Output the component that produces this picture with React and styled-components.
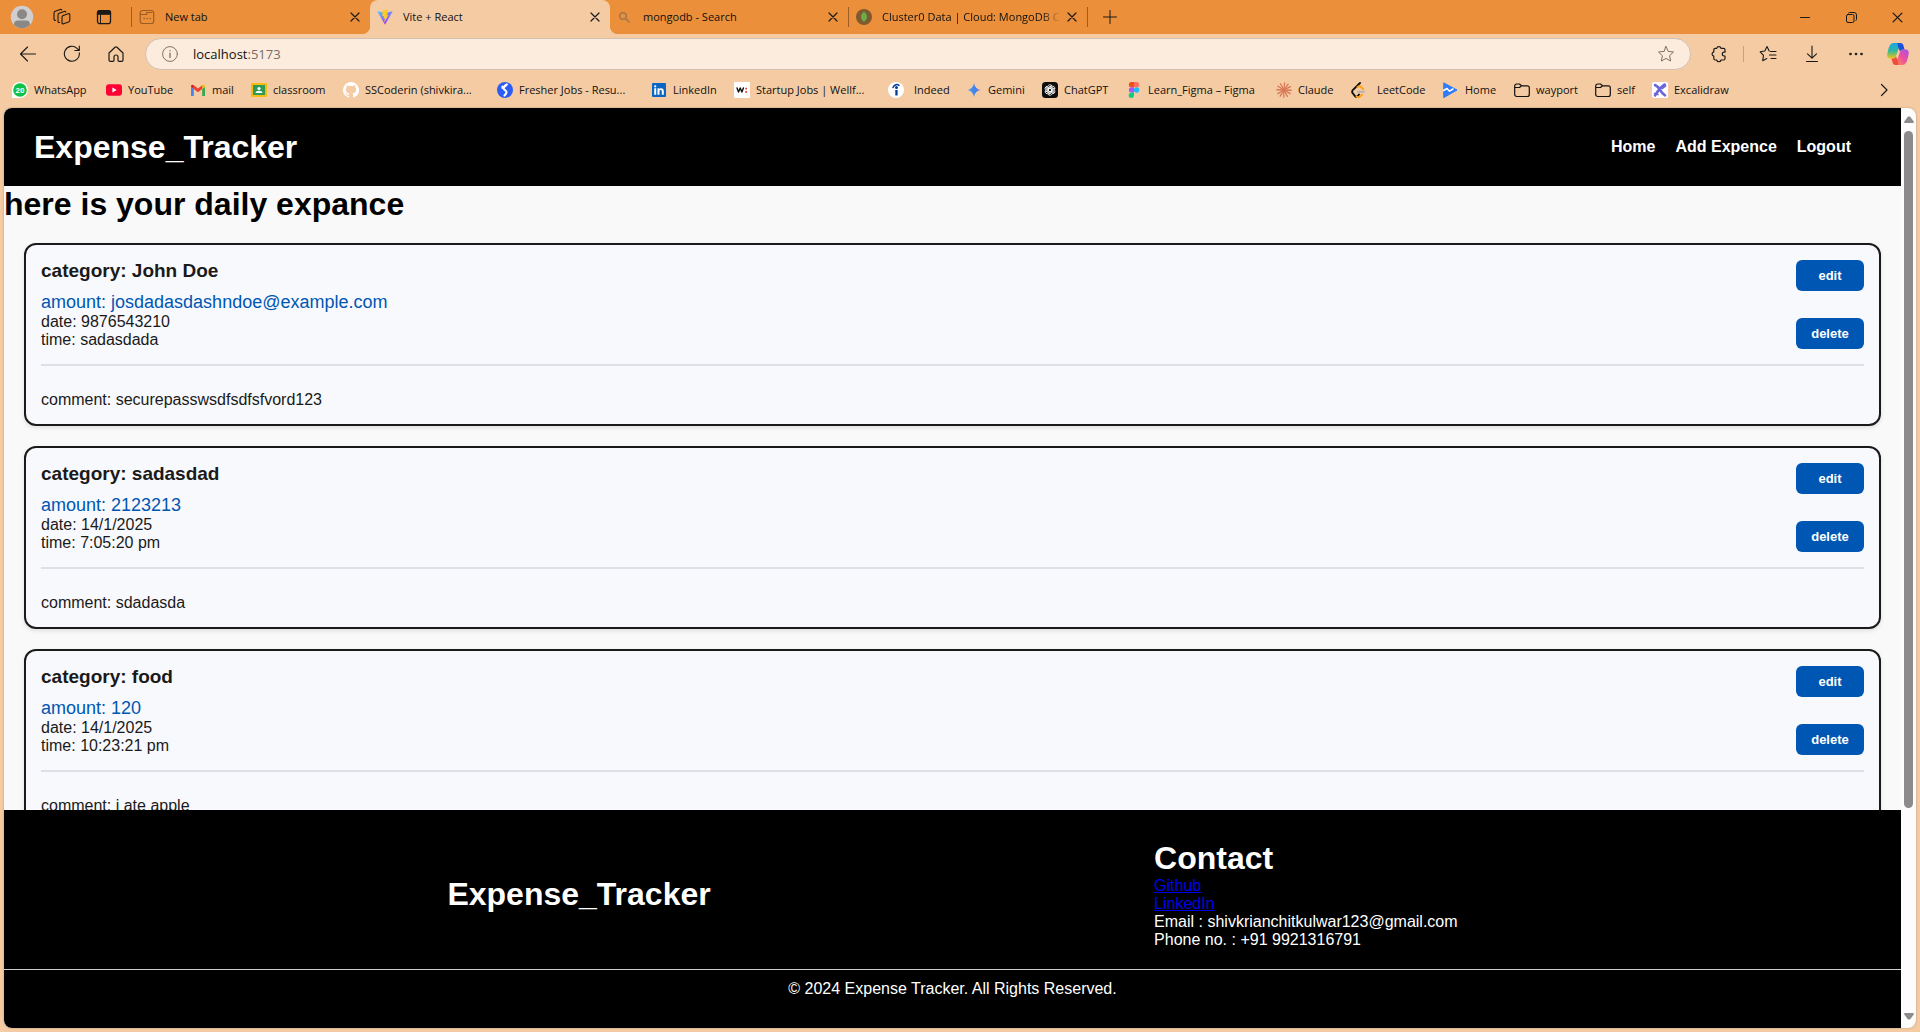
import React from "react";
import styled, { createGlobalStyle, css } from "styled-components";

const Global = createGlobalStyle`
  * { box-sizing: border-box; margin: 0; padding: 0; }
  body { background: #f5cba3; overflow: hidden; }
`;

const ui = '"Segoe UI", "Open Sans", "Noto Sans", sans-serif';
const arial = 'Arial, "Liberation Sans", sans-serif';

const Window = styled.div`
  height: 100vh;
  display: flex;
  flex-direction: column;
  background: #f5cba3;
  font-family: ${ui};
  color: #111;
`;

const IconButton = styled.button`
  display: flex;
  align-items: center;
  justify-content: center;
  flex: none;
  width: ${(p) => p.$w || 32}px;
  height: 30px;
  border: 0;
  background: none;
  color: #1b1a19;
`;

/* Tab strip */
const TabStrip = styled.header`
  display: flex;
  align-items: center;
  height: 34px;
  flex: none;
  background: #eb8f3a;
  font-size: 11px;
  line-height: 16px;
`;
const StripTools = styled.div`
  display: flex;
  align-items: center;
  width: 131px;
  padding-left: 6px;
  gap: 8px;
`;
const Tab = styled.div`
  position: relative;
  display: flex;
  align-items: center;
  flex: none;
  width: ${(p) => p.$w}px;
  height: 34px;
  padding: 0 7px;
  ${(p) =>
    p.$active &&
    css`
      background: #f5cba3;
      border-radius: 8px 8px 0 0;
      &::before,
      &::after {
        content: "";
        position: absolute;
        bottom: 0;
        width: 8px;
        height: 8px;
      }
      &::before {
        right: 100%;
        background: radial-gradient(circle at 0 0, transparent 8px, #f5cba3 8px);
      }
      &::after {
        left: 100%;
        background: radial-gradient(circle at 100% 0, transparent 8px, #f5cba3 8px);
      }
    `}
`;
const TabTitle = styled.span`
  flex: 1;
  min-width: 0;
  margin-left: 10px;
  overflow: hidden;
  white-space: nowrap;
  ${(p) => p.$fade && css`mask-image: linear-gradient(90deg, #000 88%, transparent 98%);`}
`;
const TabClose = styled.button`
  display: flex;
  align-items: center;
  justify-content: center;
  width: 16px;
  height: 16px;
  border: 0;
  background: none;
  color: #1b1a19;
`;
const Divider = styled.span`
  flex: none;
  width: 1px;
  height: ${(p) => p.$h}px;
  background: ${(p) => p.$c};
`;
const WindowControls = styled.div`
  display: flex;
  margin-left: auto;
`;

/* Address bar */
const Toolbar = styled.div`
  display: flex;
  align-items: center;
  flex: none;
  height: 40px;
  padding: 0 8px 0 12px;
`;
const NavButtons = styled.div`
  display: flex;
  gap: 12px;
  margin-right: 13px;
`;
const Omnibox = styled.div`
  flex: 1;
  display: flex;
  align-items: center;
  height: 32px;
  padding: 0 8px 0 16px;
  border: 1px solid #d2c1b1;
  border-radius: 16px;
  background: #fcecdd;
`;
const Address = styled.div`
  flex: 1;
  display: grid;
  margin-left: 15px;
  font-size: 13px;
  line-height: 18px;
`;
const AddressInput = styled.input`
  grid-area: 1 / 1;
  border: 0;
  outline: 0;
  background: none;
  color: transparent;
  font: inherit;
`;
const AddressText = styled.span`
  grid-area: 1 / 1;
  pointer-events: none;
  span { color: #756d66; }
`;
const ToolbarTools = styled.div`
  display: flex;
  align-items: center;
  gap: 12px;
  margin-left: 12px;
  ${Divider} { margin: 0 -4px; }
`;

/* Bookmarks */
const Bookmarks = styled.nav`
  display: flex;
  align-items: center;
  flex: none;
  height: 34px;
  padding: 0 20px 2px 12px;
  font-size: 11px;
  line-height: 16px;
  button { margin-left: auto; }
`;
const Bookmark = styled.a`
  display: flex;
  align-items: center;
  flex: none;
  gap: ${(p) => p.$gap || 6}px;
  width: ${(p) => p.$w}px;
  color: inherit;
  text-decoration: none;
  white-space: nowrap;
  svg { flex: none; }
`;

/* Page */
const Viewport = styled.div`
  flex: 1;
  min-height: 0;
  display: flex;
  margin: 0 4px 4px;
  border-radius: 8px;
  overflow: hidden;
  background: #fcfcfc;
  box-shadow: 0 0 2px rgba(0, 0, 0, 0.3);
`;
const Page = styled.div`
  flex: 1;
  min-width: 0;
  display: flex;
  flex-direction: column;
  background: #f9f9f9;
  font-family: ${arial};
  font-size: 16px;
  line-height: 18px;
  color: #1a1a1a;
`;
const Title = styled.h1`
  font-size: 32px;
  line-height: 37px;
  color: ${(p) => p.$c || "#fff"};
`;
const SiteHeader = styled.header`
  display: flex;
  align-items: center;
  justify-content: space-between;
  flex: none;
  height: 78px;
  padding: 0 50px 0 30px;
  background: #000;
`;
const SiteNav = styled.nav`
  display: flex;
  gap: 20px;
  a {
    color: #fff;
    font-weight: bold;
    text-decoration: none;
  }
`;
const Main = styled.main`
  flex: 1;
  min-height: 0;
  overflow: hidden;
`;
const CardList = styled.section`
  display: flex;
  flex-direction: column;
  gap: 20px;
  padding: 20px;
`;
const Card = styled.article`
  padding: 15px;
  border: 2px solid #1a1a1a;
  border-radius: 12px;
  background: #f8f9fc;
  box-shadow: 0 2px 4px rgba(0, 0, 0, 0.1);
`;
const CardTop = styled.div`
  display: flex;
  justify-content: space-between;
  padding-bottom: 15px;
  border-bottom: 2px solid #dee0e8;
`;
const Category = styled.h3`
  margin-bottom: 10px;
  font-size: 19px;
  line-height: 22px;
`;
const Amount = styled.p`
  color: #0056b3;
  font-size: 18px;
  line-height: 21px;
`;
const Comment = styled.p`
  margin-top: 25px;
`;
const Actions = styled.div`
  display: flex;
  flex-direction: column;
  justify-content: space-between;
`;
const ActionButton = styled.button`
  width: 68px;
  height: 31px;
  border: 0;
  border-radius: 6px;
  background: #0056b3;
  color: #fff;
  font: bold 13px/15px ${arial};
`;
const Footer = styled.footer`
  flex: none;
  background: #000;
  color: #fff;
`;
const FooterTop = styled.div`
  display: flex;
  align-items: center;
  justify-content: space-evenly;
  padding: 30px 0 20px;
  border-bottom: 1px solid #ccc;
`;
const Contact = styled.address`
  font-style: normal;
  a { display: block; width: fit-content; color: #0000ee; }
`;
const Copyright = styled.p`
  padding: 10px 0 30px;
  text-align: center;
`;
const Scrollbar = styled.div`
  display: flex;
  flex-direction: column;
  align-items: center;
  flex: none;
  width: 15px;
  padding: 8px 0;
  gap: 8px;
`;
const Track = styled.div`
  flex: 1;
  width: 9px;
`;
const Thumb = styled.div`
  height: 76%;
  height: calc(77% + 4px);
  border-radius: 5px;
  background: #8b8b8b;
`;

const Svg = ({ s = 16, box = 16, children, ...rest }) => (
  <svg width={s} height={s} viewBox={`0 0 ${box} ${box}`} fill="none" stroke="currentColor" strokeLinecap="round" strokeLinejoin="round" aria-hidden="true" {...rest}>
    {children}
  </svg>
);
const Fill = ({ children, ...rest }) => <Svg stroke="none" {...rest}>{children}</Svg>;

const CloseIcon = ({ s = 10 }) => <Svg s={s} box={10} strokeWidth="1.2"><path d="M1 1l8 8M9 1L1 9" /></Svg>;
const Avatar = () => (
  <Fill s={24} box={24}>
    <circle cx="12" cy="12" r="11.2" fill="#d0cece" />
    <circle cx="12" cy="9.300" r="5" fill="#8a8886" />
    <path d="M4 19.800c0-3.500 2-4.300 4-4.300h8c2 0 4 .8 4 4.300a11.200 11.200 0 0 1-16 0z" fill="#8a8886" />
  </Fill>
);
const Workspaces = () => (
  <Svg s={18} box={18} strokeWidth="1.100">
    <path d="M9 9.200c0-.8.4-1.400 1.200-1.700l5-1.800c.9-.3 1.600 0 1.600 1v5.500c0 .8-.4 1.400-1.200 1.700l-5 1.900c-.9.3-1.600 0-1.600-1z" />
    <path d="M6.600 14.500c-.9.2-1.600-.1-1.600-1V7c0-.8.4-1.400 1.200-1.700l5-1.800c.7-.2 1.300-.1 1.500.5" />
    <path d="M2.600 12.300c-.9.2-1.600-.1-1.600-1V5c0-.8.4-1.400 1.200-1.700l5-1.800c.7-.2 1.300-.1 1.500.5" />
  </Svg>
);
const TabActions = () => (
  <Svg strokeWidth="1.300"><rect x="1.500" y="1.700" width="13" height="13" rx="2.500" /><path d="M1.500 3.700a2 2 0 0 1 2-2h9a2 2 0 0 1 2 2v1.500h-13z" fill="currentColor" /><path d="M4.500 5v9" strokeWidth="1" /></Svg>
);
const NewTabIcon = () => (
  <Svg stroke="#9b5d25" strokeWidth="1.200"><rect x="1.200" y="1.500" width="13.500" height="13" rx="2.500" /><path d="M1.500 5.500h6.200V3.500h5" /><path d="M5 9.500h.2M8 9.500h.2M11 9.500h.2" strokeWidth="1.500" /></Svg>
);
const Vite = () => (
  <Fill><defs><linearGradient id="v1" x1="0" y1="0" x2=".6" y2="1"><stop stopColor="#41d1ff" /><stop offset="1" stopColor="#a82bfe" /></linearGradient></defs>
    <path d="M.3 2.300L8 15.700 15.700 2.300 8 3.700z" fill="url(#v1)" /><path d="M10.800.3L5.600 1.400l-.4 6 1.800-.3-.5 2.700 1.400-.4-.8 4.300L11.500 6l-1.700.3.8-2.600z" fill="#ffc92a" /></Fill>
);
const SearchIcon = () => <Svg stroke="#a4774e" strokeWidth="1.600"><circle cx="6" cy="7" r="3.300" /><path d="M8.500 9.500L12 13" /></Svg>;
const Mongo = () => <Fill><circle cx="8" cy="8" r="8" fill="#7e5a2f" /><path d="M8 2.500c2.200 2 3 3.600 3 5.200 0 2-1.200 3.600-2.700 4.500v1.300h-.6v-1.300C6.200 11.300 5 9.700 5 7.700c0-1.600.8-3.200 3-5.200z" fill="#6cac48" /></Fill>;
const Plus = () => <Svg s={14} box={14}><path d="M7 .5v13M.5 7h13" /></Svg>;
const Minimize = () => <Svg s={10} box={10}><path d="M.5 5.500h9" /></Svg>;
const Restore = () => <Svg s={11} box={11}><rect x=".5" y="2.500" width="7.500" height="8" rx="1.500" /><path d="M2.500 1a2 2 0 0 1 1-.5H8a2.500 2.500 0 0 1 2.500 2.500v4.500a1.500 1.500 0 0 1-.5 1" /></Svg>;
const Back = () => <Svg strokeWidth="1.100"><path d="M15.500 8H.8M7.500 1L.5 8l7 7" /></Svg>;
const Reload = () => <Svg s={18} box={18} strokeWidth="1.100"><path d="M16.300 7.800A7.500 7.500 0 1 1 14 3.300l2 2M16.300 1v4.500h-4.500" /></Svg>;
const HomeIcon = () => <Svg s={18} box={18} strokeWidth="1.200"><path d="M2 8l6-5.700a1.500 1.500 0 0 1 2 0L16 8v7a1.300 1.300 0 0 1-1.300 1.300H12a1 1 0 0 1-1-1V12a2 2 0 0 0-4 0v3.300a1 1 0 0 1-1 1H3.300A1.300 1.300 0 0 1 2 15z" /></Svg>;
const Info = () => <Svg stroke="#7b746d"><circle cx="8" cy="8" r="7.400" /><path d="M8 7.200v4.300M8 4.600v.2" strokeWidth="1.300" /></Svg>;
const starPath = "M9 1.500l2.200 4.900 5.300.6-3.900 3.700 1 5.300L9 13.400 4.400 16l1-5.300L1.500 7l5.300-.6z";
const Star = () => <Svg s={18} box={18} stroke="#77716a"><path d={starPath} /></Svg>;
const Puzzle = () => <Svg s={18} box={18} strokeWidth="1.200"><path d="M6.700 3.300a2.200 2.200 0 0 1 4.300 0h2.500A1.500 1.500 0 0 1 15 4.800v2.400h-.8a1.900 1.900 0 0 0 0 3.800h.8v2.500a1.500 1.500 0 0 1-1.500 1.500H11a2.200 2.200 0 0 1-4.300 0H5.300a1.500 1.500 0 0 1-1.500-1.500V11.200a2.200 2.200 0 0 1 0-4.300V4.800a1.500 1.500 0 0 1 1.500-1.500z" /></Svg>;
const Favorites = () => <Svg s={18} box={18} strokeWidth="1.100"><path d="M10.200 6L8 1.500 5.800 6 1.200 6.800l3.300 3.500-.8 5.400 4.100-2.200M11.500 6.500H17M10.500 10H17M12 13.500h5" /></Svg>;
const Download = () => <Svg s={18} box={18} strokeWidth="1.100"><path d="M9 1v12M4.500 8.800L9 13.200l4.500-4.400M3.500 16.500h11" /></Svg>;
const Dots = () => <Fill fill="currentColor"><circle cx="2.500" cy="8" r="1.300" /><circle cx="8" cy="8" r="1.300" /><circle cx="13.500" cy="8" r="1.300" /></Fill>;
const Copilot = () => (
  <Fill s={24} box={24}>
    <defs>
      <linearGradient id="c1" x1="0" y1="0" x2="0" y2="1"><stop stopColor="#17a6e8" /><stop offset=".5" stopColor="#2fb8a0" /><stop offset="1" stopColor="#f2c611" /></linearGradient>
      <linearGradient id="c2" x1="1" y1="0" x2="0" y2="1"><stop stopColor="#a64df0" /><stop offset=".5" stopColor="#f0509a" /><stop offset="1" stopColor="#ff9a4a" /></linearGradient>
    </defs>
    <path d="M16 5.500L15 3a3 3 0 0 0-2.700-2H7.500C4.500 1 3.300 4 2.300 7.500S0 16.500 4 16.500h3c2 0 2.800-1.500 3.200-3L12.500 7c.5-1.300 1.500-1.500 3.500-1.500z" fill="url(#c1)" />
    <path d="M8 18.500L9 21a3 3 0 0 0 2.700 2h4.800c3 0 4.200-3 5.200-6.500S24 7.500 20 7.500h-3c-2 0-2.800 1.500-3.200 3L11.500 17c-.5 1.300-1.500 1.500-3.500 1.500z" fill="url(#c2)" />
    <path d="M11.500 1h3A3 3 0 0 1 17.300 3l1.200 4.500H17c-1.500 0-2.400.7-3 2L12 5z" fill="#1b52d8" />
    <path d="M12.500 23h-3A3 3 0 0 1 6.700 21l-1.200-4.500H7c1.500 0 2.400-.7 3-2l2 4.500z" fill="#ee4f3a" />
  </Fill>
);
const Chevron = () => <Svg strokeWidth="1.200"><path d="M5.500 2.500L11 8l-5.500 5.500" /></Svg>;
const Folder = () => <Svg strokeWidth="1.200"><path d="M.7 4a2 2 0 0 1 2-2h2.800L7.500 3.800h5.800a2 2 0 0 1 2 2v6.700a2 2 0 0 1-2 2H2.700a2 2 0 0 1-2-2zM.7 5.500h4.800L7.500 3.800" /></Svg>;

const WhatsApp = () => <Fill><path d="M0 16V8a8 8 0 1 1 8 8z" fill="#fff" /><circle cx="8" cy="8" r="6.800" fill="#10c149" /><text x="8" y="11" textAnchor="middle" fontSize="8" fontWeight="700" fontFamily="Liberation Sans, sans-serif" fill="#fff">20</text></Fill>;
const YouTube = () => <Fill><rect y="2.300" width="16" height="11.500" rx="3" fill="#f03" /><path d="M6.400 5.500v5l4.300-2.500z" fill="#fff" /></Fill>;
const Gmail = () => <Fill><path d="M1 14h2.800V7L1 4.800z" fill="#4285f4" /><path d="M12.200 14H15V4.800L12.200 7z" fill="#34a853" /><path d="M1 4.800L3.800 7V3.300C2.500 2 1 2.800 1 4.200z" fill="#c5221f" /><path d="M12.200 3.300V7L15 4.800v-.6c0-1.400-1.500-2.200-2.800-.9z" fill="#fbbc04" /><path d="M3.800 3.300L8 6.500l4.200-3.200V7L8 10.200 3.800 7z" fill="#ea4335" /></Fill>;
const Classroom = () => <Fill><rect y="1" width="16" height="14" rx="1" fill="#f7bb12" /><rect x="2" y="3" width="12" height="10" fill="#2f9a57" /><circle cx="8" cy="6.500" r="1.600" fill="#fff" /><path d="M4.500 11c0-3 7-3 7 0z" fill="#fff" /></Fill>;
const GitHub = () => <Fill><path d="M8 0a8 8 0 0 0-2.530 15.590c.4.070.55-.17.55-.38v-1.490c-2.220.48-2.690-.94-2.690-.94-.36-.92-.89-1.170-.89-1.170-.72-.5.060-.49.060-.49.800.06 1.220.82 1.220.82.720 1.220 1.880.87 2.340.66.070-.52.280-.87.510-1.070-1.780-.2-3.640-.89-3.640-3.950 0-.87.310-1.590.82-2.150-.08-.2-.36-1.020.08-2.120 0 0 .67-.21 2.200.82a7.600 7.600 0 0 1 4 0c1.530-1.040 2.200-.82 2.200-.82.44 1.100.16 1.920.08 2.120.51.560.82 1.270.82 2.150 0 3.070-1.870 3.750-3.650 3.950.29.250.54.730.54 1.480v2.200c0 .21.150.46.550.38A8 8 0 0 0 8 0z" fill="#fff" /></Fill>;
const Fresher = () => <Fill><circle cx="8" cy="8" r="8" fill="#2b5cf5" /><path d="M9.800 2.500C7.500 4 6.500 5.300 6.800 6.800c.3 1.200 2.700 1.500 2.700 3.200 0 1.500-.8 2.300-2 3.500M5.500 4.500v1.500" stroke="#fff" strokeWidth="2.200" strokeLinecap="round" /></Fill>;
const LinkedIn = () => <Fill><rect x="1" y="1" width="14" height="14" rx="1" fill="#0a66c2" /><path d="M3.200 6.300h2v6.500h-2zM4.200 3.200a1.100 1.100 0 1 1 0 2.300 1.100 1.100 0 0 1 0-2.300zM6.500 6.300h1.900v.9c.8-1.500 4.400-1.600 4.400 1.700v3.900h-2V9.300c0-1.800-2.300-1.600-2.300 0v3.500h-2z" fill="#fff" /></Fill>;
const Wellfound = () => <Fill><rect width="16" height="16" rx="1" fill="#fff" /><path d="M3 6l1.500 4L6.200 6l1.700 4 1.500-4" stroke="#111" strokeWidth="1.400" /><path d="M11.300 5.800H13v1.700h-1.700zM11.300 9H13v1.700h-1.700z" fill="#e8412f" /></Fill>;
const Indeed = () => <Fill><circle cx="8" cy="8" r="8" fill="#fff" /><path d="M5 5.500C6.500 2.500 9 2 11 3.300" stroke="#003a9b" strokeWidth="1.500" /><circle cx="8.500" cy="5.500" r="1.500" fill="#003a9b" /><path d="M7.300 8h2.300v5.500H7.300z" fill="#003a9b" /></Fill>;
const Gemini = () => <Fill><defs><linearGradient id="g1"><stop stopColor="#5b9be8" /><stop offset=".6" stopColor="#3f83ec" /><stop offset="1" stopColor="#9d72c8" /></linearGradient></defs><path d="M8 1c.8 4.200 2.800 6.200 7 7-4.200.8-6.200 2.800-7 7-.8-4.200-2.800-6.200-7-7 4.200-.8 6.200-2.800 7-7z" fill="url(#g1)" /></Fill>;
const ChatGPT = () => <Fill><rect width="16" height="16" rx="3.500" fill="#0d0d0d" /><g stroke="#fff" strokeWidth=".8">{[0, 60, 120, 180, 240, 300].map((a) => <path key={a} transform={`rotate(${a} 8 8)`} d="M8 6.200L10.800 8v3.200M5.600 4.600A2.400 2.400 0 0 1 9.600 3.400L6.500 5.300v3.500" />)}</g></Fill>;
const Figma = () => <Fill><path d="M5.500 0H8v5.300H5.500a2.650 2.650 0 0 1 0-5.300z" fill="#f24e1e" /><path d="M8 0h2.500a2.650 2.650 0 0 1 0 5.300H8z" fill="#ff7262" /><path d="M5.500 5.300H8v5.300H5.500a2.650 2.650 0 0 1 0-5.300z" fill="#a259ff" /><circle cx="10.600" cy="8" r="2.650" fill="#1abcfe" /><path d="M5.500 10.600H8v2.700a2.650 2.650 0 1 1-2.500-2.700z" fill="#0acf83" /></Fill>;
const Claude = () => <Svg stroke="#d97757" strokeWidth="1.300">{[5, 35, 62, 92, 120, 152, 182, 212, 240, 272, 302, 330].map((a) => <path key={a} transform={`rotate(${a} 8 8)`} d="M8 8V.8" />)}</Svg>;
const LeetCode = () => <Svg strokeWidth="1.900"><path d="M8 12.500l-1.500 1.800c-1 1-1.500.8-2.300 0L2 11.500c-1.200-1.200-1.200-2.500 0-3.700L9 1" stroke="#111" /><path d="M5.500 14.700c1.500.8 3 .5 4-.5l1.500-1.500M6.500 5C8 4 9.500 4.300 10.500 5.300L12 7" stroke="#ffa116" /><path d="M7 9.700h6" stroke="#b3b3b3" /></Svg>;
const HomeLogo = () => <Fill><path d="M1 1l13 7L1 15.500z" fill="#2e7df6" stroke="#2e7df6" strokeLinejoin="round" /><path d="M.5 8.500L4 6.500l2.500 2.700L10 7" stroke="#fff" strokeWidth="1.500" /></Fill>;
const Excalidraw = () => <Fill><rect width="16" height="16" rx="2" fill="#fff" /><path d="M3 3c2.500 1 4 3 5.200 5.200S11.500 12.500 13 13.300M12.800 2.500C10 4 5.500 9.500 3 13.500" stroke="#6965db" strokeWidth="2.600" /><path d="M10.500 6.500L13.800 4M2.500 11.500l3.500 1" stroke="#6965db" strokeWidth="1.500" /></Fill>;

const bookmarks = [
  ["WhatsApp", WhatsApp, 94], ["YouTube", YouTube, 84], ["mail", Gmail, 61], ["classroom", Classroom, 92],
  ["SSCoderin (shivkira...", GitHub, 154], ["Fresher Jobs - Resu...", Fresher, 154], ["LinkedIn", LinkedIn, 83],
  ["Startup Jobs | Wellf...", Wellfound, 154], ["Indeed", Indeed, 78, 10], ["Gemini", Gemini, 76], ["ChatGPT", ChatGPT, 84],
  ["Learn_Figma – Figma", Figma, 150], ["Claude", Claude, 75], ["LeetCode", LeetCode, 92, 10], ["Home", HomeLogo, 71],
  ["wayport", Folder, 81], ["self", Folder, 57], ["Excalidraw", Excalidraw, 80],
];

const expenses = [
  { category: "John Doe", amount: "josdadasdashndoe@example.com", date: "9876543210", time: "sadasdada", comment: "securepasswsdfsdfsfvord123" },
  { category: "sadasdad", amount: "2123213", date: "14/1/2025", time: "7:05:20 pm", comment: "sdadasda" },
  { category: "food", amount: "120", date: "14/1/2025", time: "10:23:21 pm", comment: "i ate apple" },
];

function BrowserTab({ title, icon: Icon, width, active, fade }) {
  return (
    <Tab $w={width} $active={active}>
      <Icon />
      <TabTitle $fade={fade}>{title}</TabTitle>
      <TabClose aria-label={`Close ${title}`}><CloseIcon /></TabClose>
    </Tab>
  );
}

function ExpenseCard({ item }) {
  return (
    <Card>
      <CardTop>
        <div>
          <Category>category: {item.category}</Category>
          <Amount>amount: {item.amount}</Amount>
          <p>date: {item.date}</p>
          <p>time: {item.time}</p>
        </div>
        <Actions>
          <ActionButton>edit</ActionButton>
          <ActionButton>delete</ActionButton>
        </Actions>
      </CardTop>
      <Comment>comment: {item.comment}</Comment>
    </Card>
  );
}

export default function App() {
  return (
    <Window>
      <Global />
      <TabStrip>
        <StripTools>
          <IconButton aria-label="Profile"><Avatar /></IconButton>
          <IconButton aria-label="Workspaces"><Workspaces /></IconButton>
          <IconButton $w={36} aria-label="Tab actions"><TabActions /></IconButton>
        </StripTools>
        <Divider $h={20} $c="#9b5d25" />
        <BrowserTab title="New tab" icon={NewTabIcon} width={238} />
        <BrowserTab title="Vite + React" icon={Vite} width={240} active />
        <BrowserTab title="mongodb - Search" icon={SearchIcon} width={238} />
        <Divider $h={20} $c="#9b5d25" />
        <BrowserTab title="Cluster0 Data | Cloud: MongoDB C" icon={Mongo} width={238} fade />
        <Divider $h={20} $c="#9b5d25" />
        <IconButton $w={44} aria-label="New tab"><Plus /></IconButton>
        <WindowControls>
          <IconButton $w={46} aria-label="Minimize"><Minimize /></IconButton>
          <IconButton $w={46} aria-label="Restore"><Restore /></IconButton>
          <IconButton $w={46} aria-label="Close window"><CloseIcon s={11} /></IconButton>
        </WindowControls>
      </TabStrip>
      <Toolbar>
        <NavButtons>
          <IconButton aria-label="Back"><Back /></IconButton>
          <IconButton aria-label="Refresh"><Reload /></IconButton>
          <IconButton aria-label="Home"><HomeIcon /></IconButton>
        </NavButtons>
        <Omnibox>
          <Info />
          <Address>
            <AddressInput aria-label="Address" />
            <AddressText>localhost<span>:5173</span></AddressText>
          </Address>
          <IconButton aria-label="Add to favorites"><Star /></IconButton>
        </Omnibox>
        <ToolbarTools>
          <IconButton aria-label="Extensions"><Puzzle /></IconButton>
          <Divider $h={16} $c="#c9a17d" />
          <IconButton aria-label="Favorites"><Favorites /></IconButton>
          <IconButton aria-label="Downloads"><Download /></IconButton>
          <IconButton aria-label="More"><Dots /></IconButton>
          <IconButton $w={28} aria-label="Copilot"><Copilot /></IconButton>
        </ToolbarTools>
      </Toolbar>
      <Bookmarks aria-label="Favorites bar">
        {bookmarks.map(([label, Icon, w, gap]) => (
          <Bookmark key={label} href="#" $w={w} $gap={gap}><Icon />{label}</Bookmark>
        ))}
        <IconButton aria-label="More favorites"><Chevron /></IconButton>
      </Bookmarks>
      <Viewport>
        <Page>
          <SiteHeader>
            <Title as="h2">Expense_Tracker</Title>
            <SiteNav>
              <a href="#">Home</a>
              <a href="#">Add Expence</a>
              <a href="#">Logout</a>
            </SiteNav>
          </SiteHeader>
          <Main>
            <Title $c="#000">here is your daily expance</Title>
            <CardList>
              {expenses.map((item) => <ExpenseCard key={item.category} item={item} />)}
            </CardList>
          </Main>
          <Footer>
            <FooterTop>
              <Title as="h2">Expense_Tracker</Title>
              <Contact>
                <Title as="h2">Contact</Title>
                <a href="#">Github</a>
                <a href="#">LinkedIn</a>
                <p>Email : shivkrianchitkulwar123@gmail.com</p>
                <p>Phone no. : +91 9921316791</p>
              </Contact>
            </FooterTop>
            <Copyright>© 2024 Expense Tracker. All Rights Reserved.</Copyright>
          </Footer>
        </Page>
        <Scrollbar aria-hidden="true">
          <svg width="10" height="7" viewBox="0 0 10 7"><path d="M4 .5h2L9.700 5.500V7H.3V5.500z" fill="#8b8b8b" /></svg>
          <Track><Thumb /></Track>
          <svg width="10" height="7" viewBox="0 0 10 7"><path d="M4 6.500h2L9.700 1.500V0H.3v1.500z" fill="#8b8b8b" /></svg>
        </Scrollbar>
      </Viewport>
    </Window>
  );
}
